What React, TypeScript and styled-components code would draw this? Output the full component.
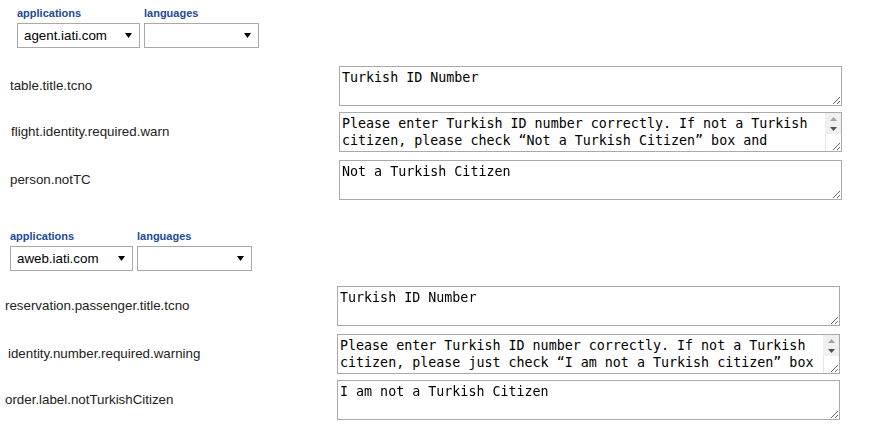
import React from 'react';
import styled, { createGlobalStyle } from 'styled-components';

const GlobalStyle = createGlobalStyle`
  body {
    margin: 0;
    background: #fff;
    font-family: "Liberation Sans", Arial, sans-serif;
  }
`;

const Page = styled.div`
  padding-top: 6px;
`;

const Block = styled.section<{ $top: number }>`
  margin-top: ${p => p.$top}px;
`;

const Filters = styled.div<{ $indent: number }>`
  display: flex;
  gap: 4px;
  padding-left: ${p => p.$indent}px;
`;

const Field = styled.div`
  display: flex;
  flex-direction: column;
`;

const FieldLabel = styled.label`
  font-size: 11px;
  font-weight: 700;
  line-height: 14px;
  color: #23499a;
  margin-bottom: 3px;
`;

const SelectWrap = styled.div<{ $width: number }>`
  position: relative;
  width: ${p => p.$width}px;
`;

const Select = styled.select`
  appearance: none;
  display: block;
  width: 100%;
  height: 25px;
  margin: 0;
  padding: 0 20px 0 6px;
  border: 1px solid #a9a9a9;
  border-radius: 0;
  background: #fff;
  color: #000;
  font-family: "Liberation Sans", Arial, sans-serif;
  font-size: 13.3333px;
  outline: none;
`;

const Arrow = styled.svg`
  position: absolute;
  right: 8px;
  top: 10px;
  pointer-events: none;
`;

const Rows = styled.div<{ $top: number }>`
  margin-top: ${p => p.$top}px;
`;

const Row = styled.div<{ $top: number }>`
  display: flex;
  align-items: center;
  margin-top: ${p => p.$top}px;
`;

const Key = styled.div<{ $width: number; $indent: number }>`
  flex: 0 0 ${p => p.$width - p.$indent}px;
  padding-left: ${p => p.$indent}px;
  padding-bottom: 2px;
  font-size: 13.3333px;
  color: #222;
`;

const ValueBox = styled.div`
  position: relative;
`;

const Value = styled.textarea`
  display: block;
  box-sizing: border-box;
  width: 503px;
  height: 40px;
  margin: 0;
  padding: 2px;
  border: 1px solid #a9a9a9;
  font-family: "DejaVu Sans Mono", monospace;
  font-size: 13.3333px;
  line-height: 17px;
  color: #000;
  outline: none;
`;

/* the browser hides native scrollbars in the capture, so the rail is drawn over it */
const ScrollRail = styled.div`
  position: absolute;
  top: 1px;
  right: 1px;
  bottom: 1px;
  width: 16px;
  display: flex;
  flex-direction: column;
  pointer-events: none;
`;

const RailTrack = styled.div`
  height: 21px;
  background: #f0f0f0;
  display: flex;
  flex-direction: column;
  align-items: center;
  justify-content: center;
  gap: 6px;
`;

const RailCorner = styled.div`
  flex: 1;
  border-left: 1px solid #e6e6e6;
`;

type Entry = { key: string; value: string; indent: number; top: number; scroll?: boolean };

type Group = {
  top: number;
  filterIndent: number;
  rowsTop: number;
  keyWidth: number;
  app: string;
  entries: Entry[];
};

const groups: Group[] = [
  {
    top: 0,
    filterIndent: 17,
    rowsTop: 18,
    keyWidth: 339,
    app: 'agent.iati.com',
    entries: [
      { key: 'table.title.tcno', value: 'Turkish ID Number', indent: 10, top: 0 },
      {
        key: 'flight.identity.required.warn',
        value:
          'Please enter Turkish ID number correctly. If not a Turkish citizen, please check \u201cNot a Turkish Citizen\u201d box and continue with your passport number.',
        indent: 11,
        top: 6,
        scroll: true,
      },
      { key: 'person.notTC', value: 'Not a Turkish Citizen', indent: 10, top: 8 },
    ],
  },
  {
    top: 29,
    filterIndent: 10,
    rowsTop: 15,
    keyWidth: 337,
    app: 'aweb.iati.com',
    entries: [
      { key: 'reservation.passenger.title.tcno', value: 'Turkish ID Number', indent: 5, top: 0 },
      {
        key: 'identity.number.required.warning',
        value:
          'Please enter Turkish ID number correctly. If not a Turkish citizen, please just check \u201cI am not a Turkish citizen\u201d box and continue with your passport number.',
        indent: 8,
        top: 8,
        scroll: true,
      },
      { key: 'order.label.notTurkishCitizen', value: 'I am not a Turkish Citizen', indent: 5, top: 6 },
    ],
  },
];

function Dropdown({ width, value }: { width: number; value: string }) {
  return (
    <SelectWrap $width={width}>
      <Select defaultValue={value}>
        <option value={value}>{value}</option>
      </Select>
      <Arrow width="7" height="5" viewBox="0 0 7 5">
        <polygon points="0,0 7,0 3.5,5" fill="#000" />
      </Arrow>
    </SelectWrap>
  );
}

function Rail() {
  return (
    <ScrollRail>
      <RailTrack>
        <svg width="7" height="4" viewBox="0 0 7 4">
          <polygon points="0,4 7,4 3.5,0" fill="#a3a3a3" />
        </svg>
        <svg width="7" height="4" viewBox="0 0 7 4">
          <polygon points="0,0 7,0 3.5,4" fill="#505050" />
        </svg>
      </RailTrack>
      <RailCorner />
    </ScrollRail>
  );
}

export default function App() {
  return (
    <>
      <GlobalStyle />
      <Page>
        {groups.map(g => (
          <Block key={g.app} $top={g.top}>
            <Filters $indent={g.filterIndent}>
              <Field>
                <FieldLabel>applications</FieldLabel>
                <Dropdown width={123} value={g.app} />
              </Field>
              <Field>
                <FieldLabel>languages</FieldLabel>
                <Dropdown width={115} value="" />
              </Field>
            </Filters>
            <Rows $top={g.rowsTop}>
              {g.entries.map(e => (
                <Row key={e.key} $top={e.top}>
                  <Key $width={g.keyWidth} $indent={e.indent}>
                    {e.key}
                  </Key>
                  <ValueBox>
                    <Value defaultValue={e.value} />
                    {e.scroll && <Rail />}
                  </ValueBox>
                </Row>
              ))}
            </Rows>
          </Block>
        ))}
      </Page>
    </>
  );
}
